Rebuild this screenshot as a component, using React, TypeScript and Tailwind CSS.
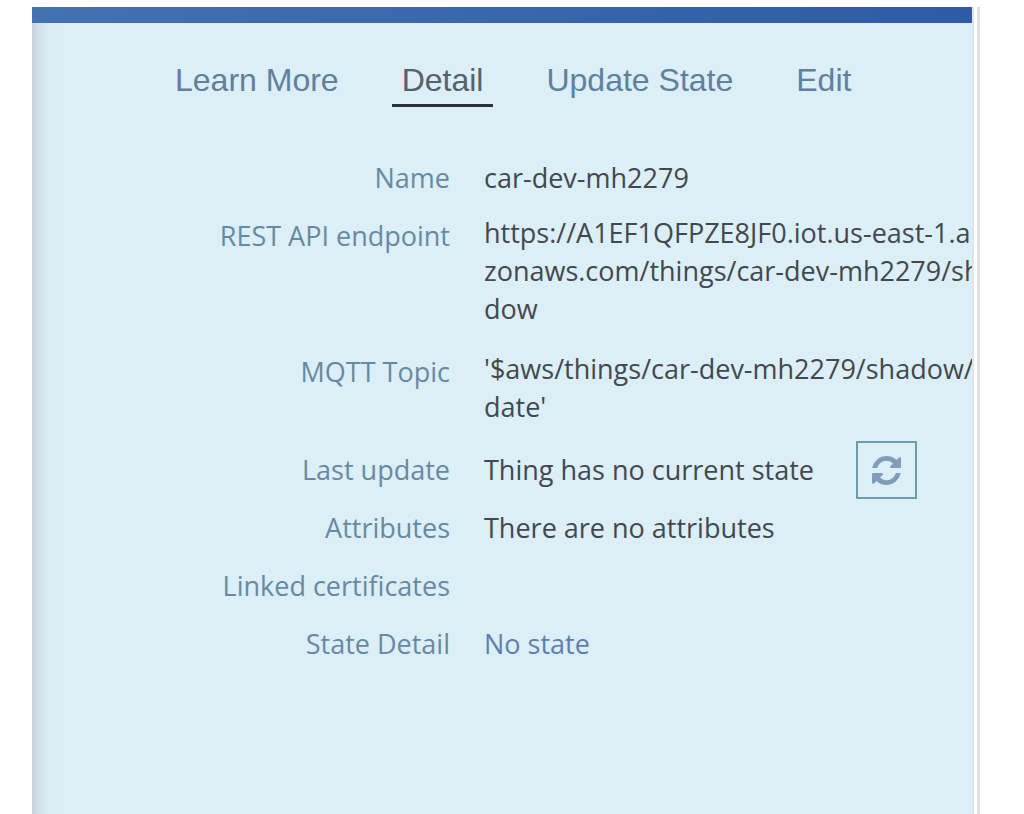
import { useState } from "react";

interface DetailRow {
  label: string;
  lines: string[];
  refresh?: boolean;
  link?: boolean;
}

const tabs = ["Learn More", "Detail", "Update State", "Edit"];

const rows: DetailRow[] = [
  { label: "Name", lines: ["car-dev-mh2279"] },
  {
    label: "REST API endpoint",
    lines: [
      "https://A1EF1QFPZE8JF0.iot.us-east-1.a",
      "zonaws.com/things/car-dev-mh2279/sh",
      "dow",
    ],
  },
  {
    label: "MQTT Topic",
    lines: ["'$aws/things/car-dev-mh2279/shadow/", "date'"],
  },
  {
    label: "Last update",
    lines: ["Thing has no current state"],
    refresh: true,
  },
  { label: "Attributes", lines: ["There are no attributes"] },
  { label: "Linked certificates", lines: [] },
  { label: "State Detail", lines: ["No state"], link: true },
];

function RefreshIcon() {
  return (
    <svg viewBox="0 0 1536 1536" className="size-[29px]" fill="currentColor">
      <path d="M1511 928q0 5-1 7-64 268-268 434.5T764 1536q-146 0-282.5-55T238 1324l-129 129q-19 19-45 19t-45-19-19-45V960q0-26 19-45t45-19h448q26 0 45 19t19 45-19 45l-137 137q71 66 161 102t187 36q134 0 250-65t186-179q11-17 53-117 8-23 30-23h192q13 0 22.5 9.5t9.5 22.5zm25-800v448q0 26-19 45t-45 19h-448q-26 0-45-19t-19-45 19-45l138-138Q969 256 768 256q-134 0-250 65T332 500q-11 17-53 117-8 23-30 23H50q-13 0-22.5-9.5T18 608v-7q65-268 270-434.5T768 0q146 0 284 55.5T1297 212l130-129q19-19 45-19t45 19 19 45z" />
    </svg>
  );
}

function Value({ row }: { row: DetailRow }) {
  if (row.link) {
    return (
      <a href="#state" className="leading-11 text-[#5f80ad]">
        {row.lines[0]}
      </a>
    );
  }

  // Wrapped values run past the panel edge and are cut off there
  if (row.lines.length > 1) {
    return (
      <div className="pb-2 leading-[38px]">
        {row.lines.map((line) => (
          <div key={line}>{line}</div>
        ))}
      </div>
    );
  }

  return (
    <div className="flex items-center gap-[42px] leading-11">
      <span>{row.lines[0]}</span>
      {row.refresh && (
        <button
          aria-label="Refresh"
          className="-my-2 flex h-[58px] w-[61px] items-center justify-center border-2 border-[#6b9cb0] text-[#809db8]"
        >
          <RefreshIcon />
        </button>
      )}
    </div>
  );
}

export default function App() {
  const [activeTab, setActiveTab] = useState("Detail");

  return (
    <div className="flex min-h-screen bg-white pt-[7px] pr-11 pl-8">
      <div className="flex min-w-0 grow border-r-[3px] border-[#e2dee3] pr-[3px]">
        <main className="min-w-0 grow overflow-hidden border-r-2 border-[#dde4ea] bg-[linear-gradient(to_right,#c8d2df,#d3e2ec_8px,#daeef4_16px,#dceef6_36px)]">
          <div className="h-4 bg-linear-to-r from-[#4471b0] to-[#2f5aa6]" />

          <nav className="flex gap-[43px] pt-[34px] pl-[133px] font-['Liberation_Sans',Arial,sans-serif] text-[32px]">
            {tabs.map((tab) => (
              <button
                key={tab}
                className={`border-b-[3px] px-2.5 pt-1 pb-1 leading-[39px] whitespace-nowrap ${
                  activeTab === tab
                    ? "border-[#2c3338] text-[#56616a]"
                    : "border-transparent text-[#5f819c]"
                }`}
                onClick={() => setActiveTab(tab)}
              >
                {tab}
              </button>
            ))}
          </nav>

          <dl className="mt-[49px] font-['Open_Sans',sans-serif] text-[27px] text-[#42494e]">
            {rows.map((row) => (
              <div
                key={row.label}
                className="mb-[14px] grid grid-cols-[418px_1fr] gap-x-[34px]"
              >
                <dt className="text-right leading-11 text-[#678aa3]">
                  {row.label}
                </dt>
                <dd className="min-w-0 whitespace-nowrap">
                  <Value row={row} />
                </dd>
              </div>
            ))}
          </dl>
        </main>
      </div>
    </div>
  );
}
